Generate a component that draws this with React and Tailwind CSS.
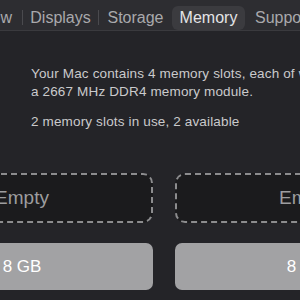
const TABS_BEFORE = [
  { label: "Overview", w: "w-[22px]" },
  { label: "Displays", w: "w-[75px]" },
  { label: "Storage", w: "w-[73px]" },
]

function Sep() {
  return <div className="w-px h-[15px] bg-[#4a4a4e] shrink-0 mt-[10px]" />
}

function Slot({ empty, label }) {
  if (empty) {
    return (
      <div className="w-[262px] h-[50px] shrink-0 rounded-[10px] border-2 border-dashed border-[#8c8c8e] bg-[#1b1b1d] flex items-center justify-center text-[19px] text-[#9d9d9f]">
        {label}
      </div>
    )
  }
  return (
    <div className="w-[262px] h-[47px] shrink-0 rounded-[7px] bg-[#a2a2a4] flex items-center justify-center text-[17px] text-white">
      {label}
    </div>
  )
}

export default function App() {
  return (
    <div className="w-[300px] h-[300px] overflow-hidden bg-[#242428] font-['Liberation_Sans',Arial,sans-serif]">
      {/* tab bar */}
      <div className="h-[31px] bg-[#2d2d31] border-b border-[#3a3a3e] flex items-start text-[16px] whitespace-nowrap">
        {TABS_BEFORE.map((t, i) => (
          <div key={t.label} className="flex items-start">
            {i > 0 && <Sep />}
            <div className={`${t.w} shrink-0 h-[24px] mt-[6px] flex items-center ${i === 0 ? "justify-end pr-[10px]" : "justify-center"} text-[#a9a9ac]`}>
              {t.label}
            </div>
          </div>
        ))}
        <div className="w-[73px] shrink-0 h-[24px] mt-[6px] rounded-[6px] bg-[#3b3b3f] flex items-center justify-center text-[#e4e4e6]">
          Memory
        </div>
        <div className="shrink-0 h-[24px] mt-[6px] pl-[10px] flex items-center text-[#a9a9ac]">
          Support
        </div>
      </div>

      {/* description */}
      <div className="pl-[31px] mt-[34px] text-[13.5px] tracking-[0.15px] leading-[18px] text-[#cacacc] whitespace-nowrap">
        <p>
          Your Mac contains 4 memory slots, each of which can accept
          <br />a 2667 MHz DDR4 memory module.
        </p>
        <p className="mt-[12px]">2 memory slots in use, 2 available</p>
      </div>

      {/* slots */}
      <div className="flex gap-[22px] -ml-[109px] mt-[42px]">
        <Slot empty label="Empty" />
        <Slot empty label="Empty" />
      </div>
      <div className="flex gap-[22px] -ml-[109px] mt-[20px]">
        <Slot label="8 GB" />
        <Slot label="8 GB" />
      </div>
    </div>
  )
}
